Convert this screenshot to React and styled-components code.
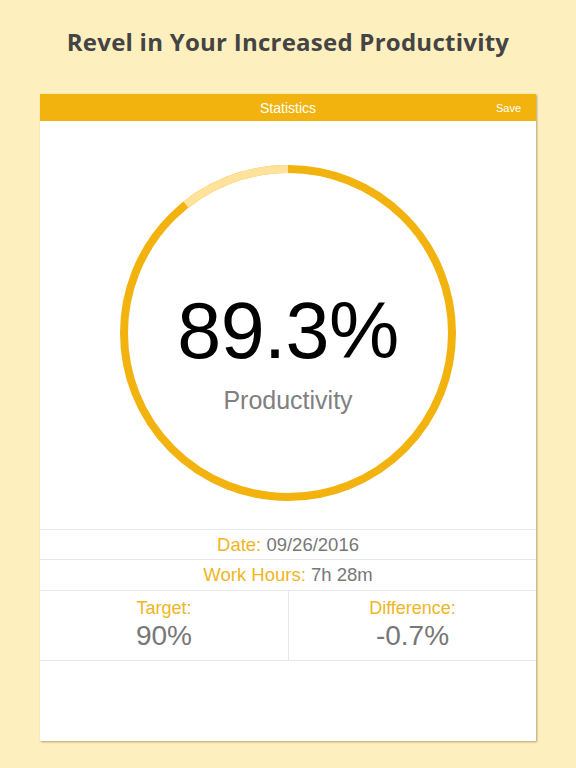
import React from "react";
import styled, { createGlobalStyle } from "styled-components";

const Global = createGlobalStyle`
  html, body { margin: 0; padding: 0; background: #FEEFBE; }
  body { font-family: "Liberation Sans", Arial, sans-serif; }
`;

const Page = styled.div`
  width: 576px;
  height: 768px;
  box-sizing: border-box;
  padding: 25px 40px 27px 40px;
  display: flex;
  flex-direction: column;
  background: #FEEFBE;
`;

const Title = styled.h1`
  margin: 0;
  height: 34px;
  line-height: 34px;
  text-align: center;
  font-family: "Open Sans", "DejaVu Sans", sans-serif;
  font-weight: 700;
  font-size: 24px;
  color: #444444;
  letter-spacing: 0.25px;
  margin-bottom: 35px;
`;

const Card = styled.div`
  flex: 1;
  display: flex;
  flex-direction: column;
  background: #ffffff;
  box-shadow: 1px 1px 2px rgba(90, 70, 20, 0.45);
`;

const Header = styled.div`
  height: 27px;
  flex-shrink: 0;
  background: #F2B30F;
  display: grid;
  grid-template-columns: 1fr auto 1fr;
  align-items: center;
  color: #ffffff;
  padding: 0 15px;
`;

const HeaderTitle = styled.div`
  grid-column: 2;
  font-size: 14px;
`;

const HeaderAction = styled.div`
  grid-column: 3;
  justify-self: end;
  font-size: 11px;
`;

const GaugeArea = styled.div`
  height: 408px;
  flex-shrink: 0;
  box-sizing: border-box;
  padding-top: 40px;
  display: flex;
  justify-content: center;
`;

const Gauge = styled.div`
  position: relative;
  width: 344px;
  height: 344px;
`;

const GaugeText = styled.div`
  position: absolute;
  inset: 0;
  display: flex;
  flex-direction: column;
  align-items: center;
  justify-content: flex-start;
  padding-top: 128px;
`;

const BigValue = styled.div`
  font-size: 79px;
  line-height: 84px;
  color: #000000;
  letter-spacing: -0.5px;
`;

const BigLabel = styled.div`
  font-size: 25px;
  line-height: 30px;
  color: #808080;
  margin-top: 12px;
`;

const Row = styled.div`
  height: ${(p) => p.$h}px;
  box-sizing: border-box;
  flex-shrink: 0;
  border-top: 1px solid #E8E8E8;
  display: flex;
  align-items: center;
  justify-content: center;
  font-size: 18.5px;
`;

const Label = styled.span`
  color: #EEB624;
`;

const Value = styled.span`
  color: #777777;
`;

const Split = styled.div`
  height: 71px;
  box-sizing: border-box;
  flex-shrink: 0;
  border-top: 1px solid #E8E8E8;
  border-bottom: 1px solid #E8E8E8;
  display: grid;
  grid-template-columns: 1fr 1fr;
`;

const Cell = styled.div`
  display: flex;
  flex-direction: column;
  align-items: center;
  justify-content: center;
  padding-bottom: 2px;
  & + & {
    border-left: 1px solid #E8E8E8;
  }
`;

const CellLabel = styled.div`
  font-size: 18px;
  line-height: 22px;
  color: #EEB624;
`;

const CellValue = styled.div`
  font-size: 28px;
  line-height: 34px;
  color: #777777;
`;

function Ring({ pct }) {
  const r = 164;
  const c = 2 * Math.PI * r;
  const missing = (1 - pct / 100) * c;
  return (
    <svg width="344" height="344" viewBox="0 0 344 344">
      <circle cx="172" cy="172" r={r} fill="none" stroke="#F2B30F" strokeWidth="8" />
      <circle
        cx="172"
        cy="172"
        r={r}
        fill="none"
        stroke="#FFE39C"
        strokeWidth="8"
        strokeDasharray={`${missing} ${c}`}
        transform="rotate(-90 172 172) scale(1 -1) translate(0 -344)"
      />
    </svg>
  );
}

export default function App() {
  return (
    <>
      <Global />
      <Page>
        <Title>Revel in Your Increased Productivity</Title>
        <Card>
          <Header>
            <HeaderTitle>Statistics</HeaderTitle>
            <HeaderAction>Save</HeaderAction>
          </Header>
          <GaugeArea>
            <Gauge>
              <Ring pct={89.3} />
              <GaugeText>
                <BigValue>89.3%</BigValue>
                <BigLabel>Productivity</BigLabel>
              </GaugeText>
            </Gauge>
          </GaugeArea>
          <Row $h={30}>
            <Label>Date:&nbsp;</Label>
            <Value>09/26/2016</Value>
          </Row>
          <Row $h={31}>
            <Label>Work Hours:&nbsp;</Label>
            <Value>7h 28m</Value>
          </Row>
          <Split>
            <Cell>
              <CellLabel>Target:</CellLabel>
              <CellValue>90%</CellValue>
            </Cell>
            <Cell>
              <CellLabel>Difference:</CellLabel>
              <CellValue>-0.7%</CellValue>
            </Cell>
          </Split>
        </Card>
      </Page>
    </>
  );
}
